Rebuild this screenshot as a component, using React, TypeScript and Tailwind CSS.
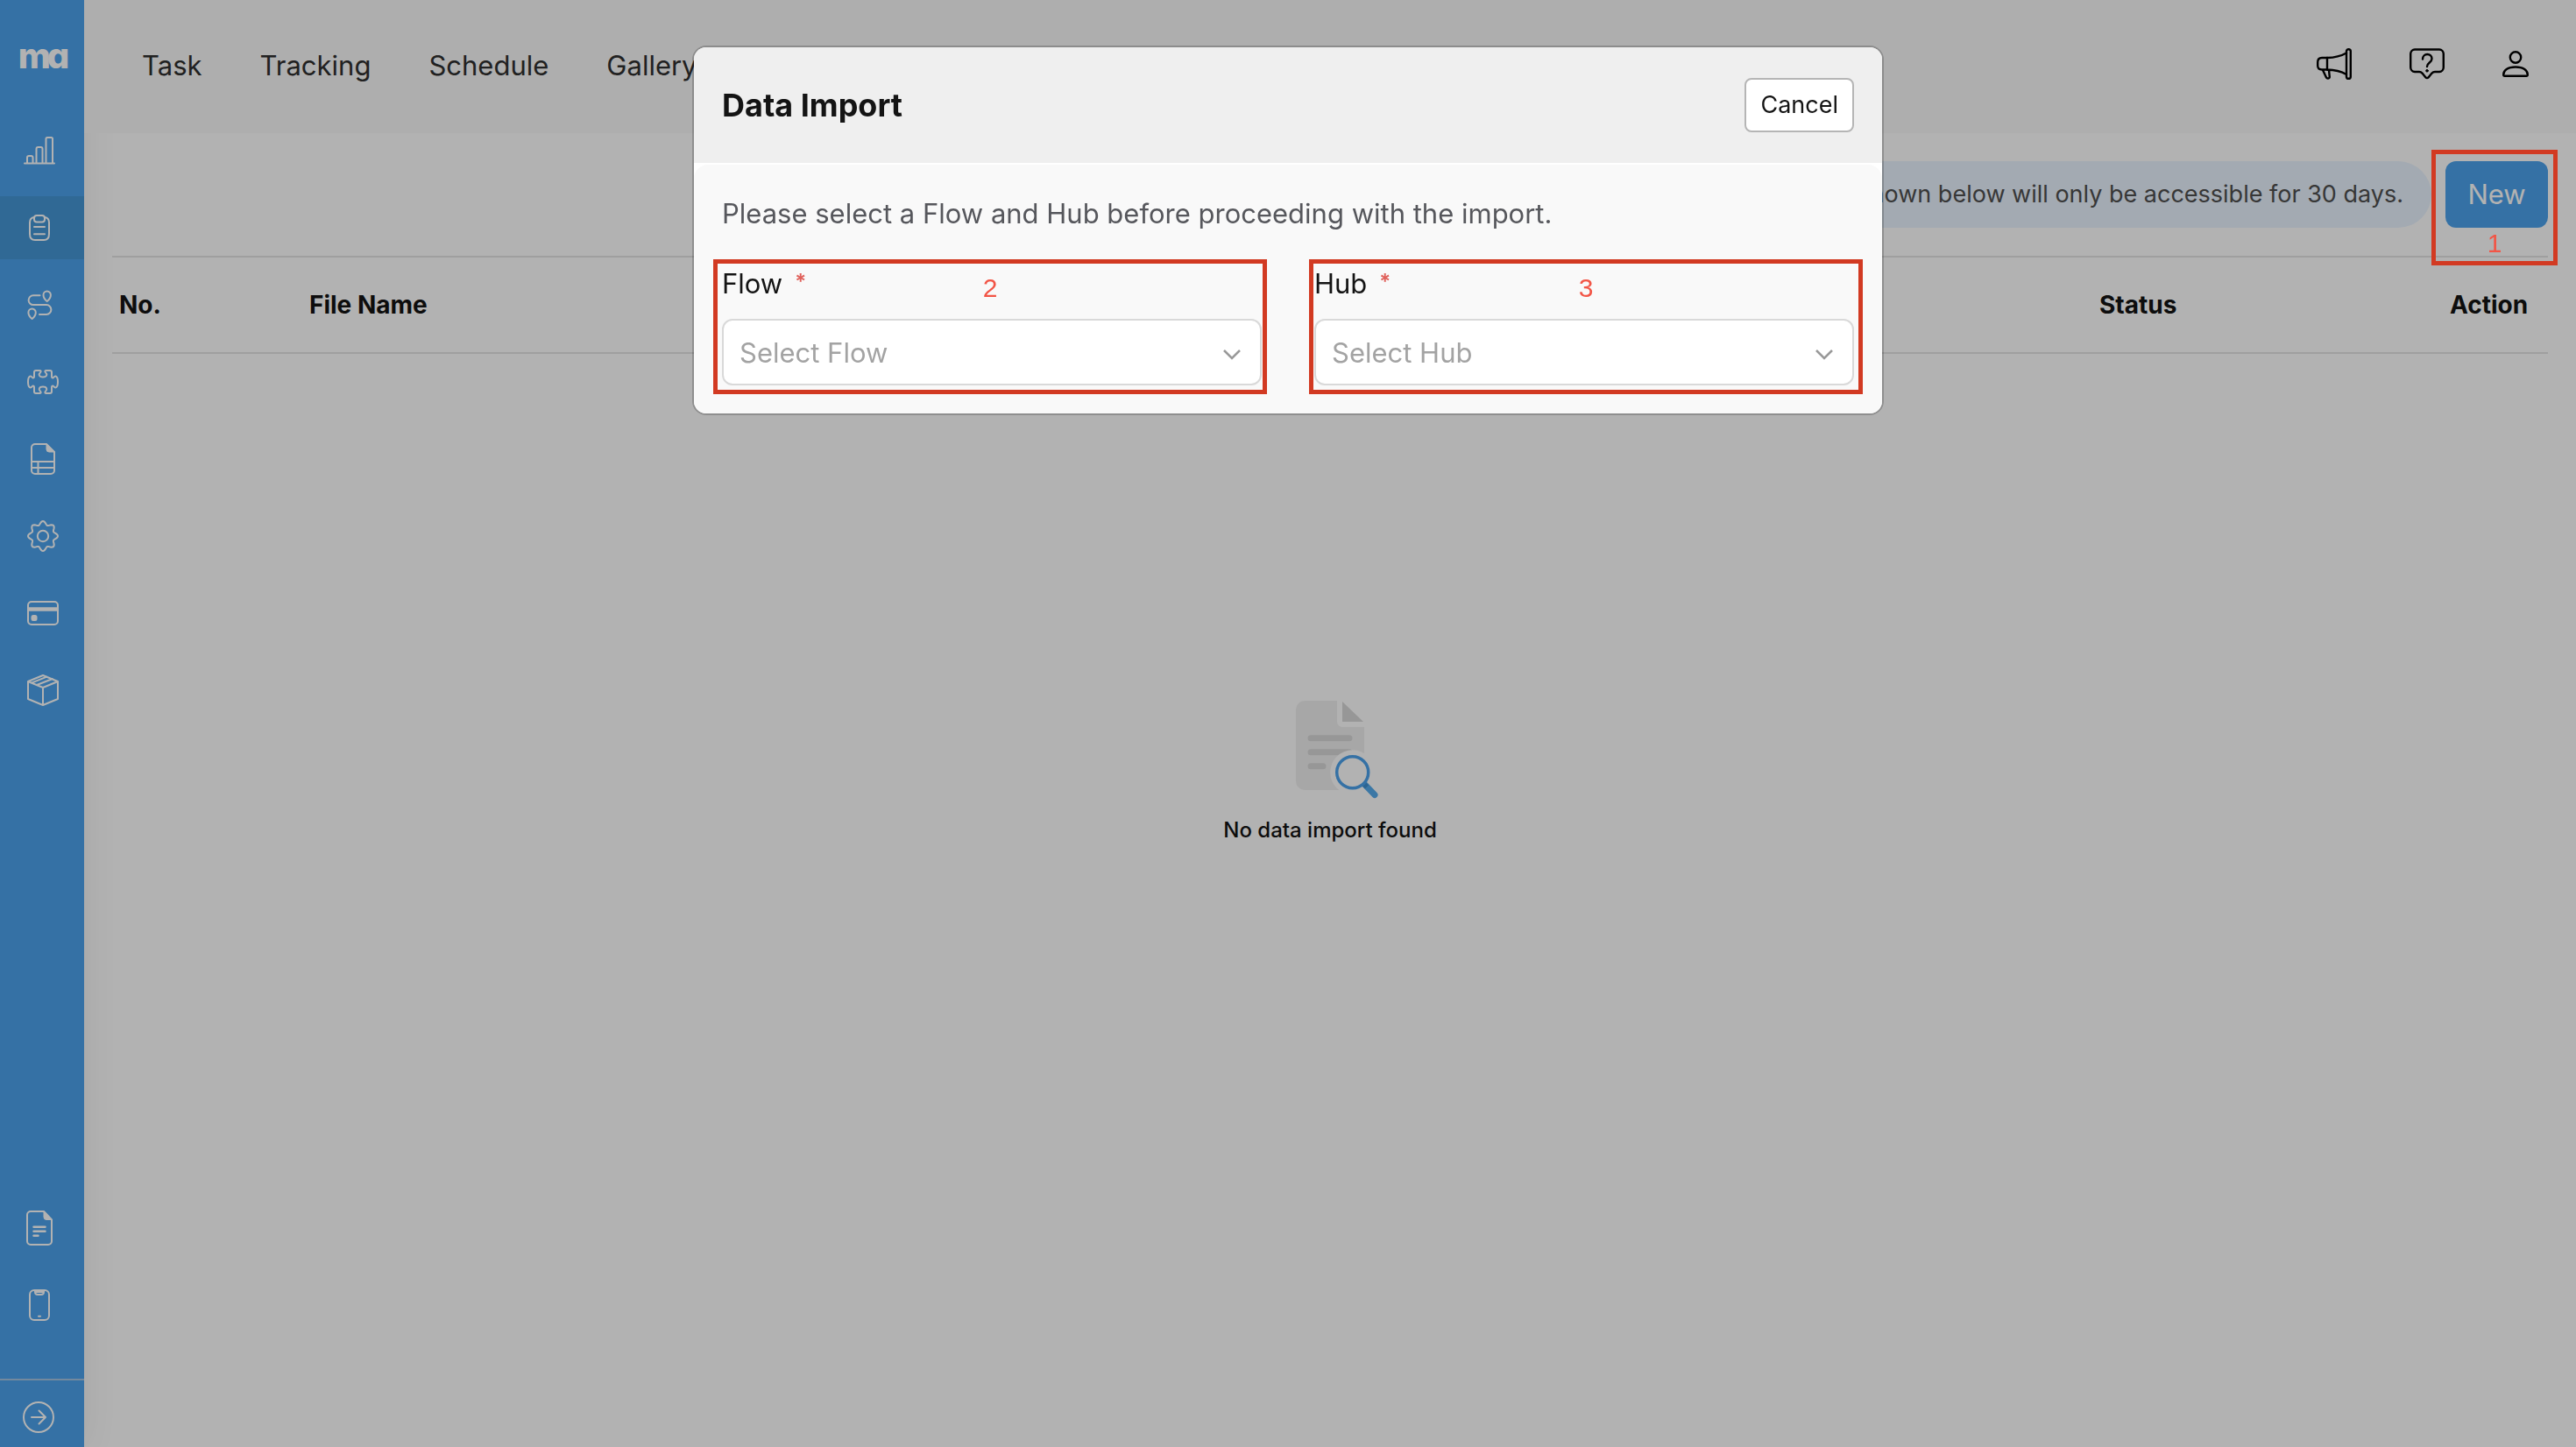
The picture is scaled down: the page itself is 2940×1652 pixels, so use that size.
import React from 'react';

type IconProps = { className?: string };

interface NavItem {
	label: string;
	icon: React.FC<IconProps>;
	active?: boolean;
}

const stroke = {
	fill: 'none',
	stroke: 'currentColor',
	strokeWidth: 2,
	strokeLinecap: 'round' as const,
	strokeLinejoin: 'round' as const,
};

const ChartIcon = ({ className }: IconProps) => (
	<svg className={className} viewBox="0 0 36 36" {...stroke}>
		<path d="M1 32.500h34M4 32v-6a2 2 0 0 1 2-2h2.500a2 2 0 0 1 2 2v6M14.500 32V16a2 2 0 0 1 2-2h3a2 2 0 0 1 2 2v16M25.500 32V4.500a1.500 1.500 0 0 1 1.500-1.500h4.500a1.500 1.500 0 0 1 1.500 1.500V32" />
	</svg>
);

const ClipboardIcon = ({ className }: IconProps) => (
	<svg className={className} viewBox="0 0 36 36" {...stroke}>
		<path d="M12 6c-3 .5-5 2.500-5 6v13c0 5 2.500 7 6 7h10c3.500 0 6-2 6-7V12c0-3.500-2-5.500-5-6" />
		<rect x="12" y="4" width="12" height="7.500" rx="3" />
		<path d="M12 17h12M12 25.300h12" />
	</svg>
);

const RouteIcon = ({ className }: IconProps) => (
	<svg className={className} viewBox="0 0 36 36" {...stroke}>
		<path d="M18.500 7.300H11a5.400 5.400 0 0 0 0 10.800h15a5.400 5.400 0 0 1 0 10.800h-8" />
		<path d="M26.700 14c-2.500-2-4.200-4.500-4.200-7.300a4.200 4.200 0 0 1 8.400 0c0 2.800-1.700 5.300-4.200 7.300zM9.600 34c-2.500-2-4.200-4.500-4.200-7.300a4.200 4.200 0 0 1 8.400 0c0 2.800-1.700 5.300-4.200 7.300z" />
	</svg>
);

const PuzzleIcon = ({ className }: IconProps) => (
	<svg className={className} viewBox="0 0 36 36" {...stroke}>
		<path d="M10 5h4.500c1.500 0 1.500 1.500.3 2.500-2 1.700-1.500 5 3.200 5s5.200-3.300 3.200-5c-1.200-1-1.200-2.500.3-2.500H26a2 2 0 0 1 2 2v5c0 1.500 1.200 2 2.200.8 2-2.500 4.800-1.500 4.800 5.200s-2.800 7.700-4.800 5.200c-1-1.200-2.200-.7-2.200.8v5a2 2 0 0 1-2 2h-4.500c-1.500 0-1.500-1.500-.3-2.500 2-1.700 1.500-5-3.200-5s-5.200 3.300-3.200 5c1.200 1 1.200 2.500-.3 2.500H10a2 2 0 0 1-2-2v-5c0-1.500-1.200-2-2.200-.8C3.800 25.700 1 24.700 1 18s2.800-7.700 4.800-5.200c1 1.200 2.200.7 2.200-.8V7a2 2 0 0 1 2-2z" />
	</svg>
);

const SheetIcon = ({ className }: IconProps) => (
	<svg className={className} viewBox="0 0 36 36" {...stroke}>
		<path d="M9 1h13l9 9v21a4 4 0 0 1-4 4H9a4 4 0 0 1-4-4V5a4 4 0 0 1 4-4zM5 21h26M5 28h26M12.500 21v14" />
		<path d="M22 1v6a3 3 0 0 0 3 3h6z" fill="currentColor" strokeWidth="1" />
	</svg>
);

// eight soft teeth around the hub
const gearPoints = Array.from({ length: 97 }, (_, i) => {
	const a = (i / 96) * Math.PI * 2;
	const r = 15 + 2 * Math.cos(8 * a);
	return `${(18 + r * Math.cos(a)).toFixed(2)},${(18 + r * Math.sin(a)).toFixed(2)}`;
}).join(' ');

const GearIcon = ({ className }: IconProps) => (
	<svg className={className} viewBox="0 0 36 36" {...stroke}>
		<polyline points={gearPoints} />
		<circle cx="18" cy="18" r="6.200" />
	</svg>
);

const CardIcon = ({ className }: IconProps) => (
	<svg className={className} viewBox="0 0 36 36" {...stroke}>
		<rect x="1" y="5" width="34" height="26" rx="4" />
		<path d="M1 13.600h34" strokeWidth="4.500" strokeLinecap="butt" />
		<rect x="4.500" y="20" width="7" height="7" rx="2.500" fill="currentColor" stroke="none" />
	</svg>
);

const BoxIcon = ({ className }: IconProps) => (
	<svg className={className} viewBox="0 0 36 36" {...stroke}>
		<path d="M18 1l17 7v20l-17 7-17-7V8zM1 8l17 7 17-7M18 15v20M5 9.600l17.500-7M11 12l18-7" />
	</svg>
);

const FileTextIcon = ({ className }: IconProps) => (
	<svg className={className} viewBox="0 0 30 40" {...stroke}>
		<path d="M5 1h15l9 9.500V35a4 4 0 0 1-4 4H5a4 4 0 0 1-4-4V5a4 4 0 0 1 4-4z" />
		<path d="M20 1v6.500a3 3 0 0 0 3 3h6z" fill="currentColor" strokeWidth="1" />
		<path d="M8.500 18.700h13M8.500 23.700h13M8.500 28.700h5" strokeWidth="2.500" />
	</svg>
);

const PhoneIcon = ({ className }: IconProps) => (
	<svg className={className} viewBox="0 0 24 36" {...stroke}>
		<rect x="1" y="1" width="22" height="34" rx="5" />
		<path d="M7 1.500v1.500a3 3 0 0 0 3 3h4a3 3 0 0 0 3-3V1.500M8 3h8M11 30.700h2" />
	</svg>
);

const ArrowCircleIcon = ({ className }: IconProps) => (
	<svg className={className} viewBox="0 0 36 36" {...stroke}>
		<circle cx="18" cy="18" r="17" />
		<path d="M10 18h16M18.500 10.500L26 18l-7.500 7.500" />
	</svg>
);

const MegaphoneIcon = ({ className }: IconProps) => (
	<svg className={className} viewBox="0 0 40 36" {...stroke} strokeWidth={2.4}>
		<rect x="34" y="1.200" width="4.800" height="33.600" rx="2.400" />
		<path d="M12 11c8-.2 15-1.500 22-5.500M12 24.500c8 .2 15 1.500 22 5.500M12 10.800v14M12 11H6c-3 0-4.800 1.500-4.800 5v4c0 3 1.800 4.500 4.800 4.500h6M7 25l4 8.500c.6 1.300 3.600 1.300 3.800-.3L14 25" />
	</svg>
);

const HelpIcon = ({ className }: IconProps) => (
	<svg className={className} viewBox="0 0 40 36" {...stroke} strokeWidth={2.4}>
		<path d="M6 1.500h28a5 5 0 0 1 4.800 5V22a5 5 0 0 1-4.800 5h-5c-1.500 0-2.500.5-3.500 1.600l-4 4.800c-.9 1-2.100 1-3 0l-4-4.800C13.500 27.500 12.500 27 11 27H6a5 5 0 0 1-4.800-5V6.500a5 5 0 0 1 4.800-5z" />
		<path d="M15 12.500c0-3.300 2.300-5.500 5.300-5.500s5.200 2.200 5.200 5c0 4.500-5.500 4.500-5.500 9" />
		<circle cx="20" cy="25.800" r="1.300" fill="currentColor" strokeWidth="1" />
	</svg>
);

const UserIcon = ({ className }: IconProps) => (
	<svg className={className} viewBox="0 0 30 30" {...stroke} strokeWidth={2.4}>
		<circle cx="15" cy="7.500" r="6.200" />
		<path d="M1.200 27.300C1.200 22.500 6 18.500 15 18.500s13.800 4 13.800 8.800c0 1-.5 1.500-1.500 1.500H2.700c-1 0-1.500-.5-1.500-1.500z" />
	</svg>
);

const NoDataIcon = ({ className }: IconProps) => (
	<svg className={className} viewBox="0 0 112 128" fill="none">
		<path d="M27 12h37v24a6 6 0 0 0 6 6h25v62a10 10 0 0 1-10 10H27a10 10 0 0 1-10-10V22a10 10 0 0 1 10-10z" fill="#f0f0f0" />
		<path d="M70 13l24 23H70z" fill="#d9d9d9" />
		<path d="M34 54.700h44M34 70.700h44M34 86.700h14" stroke="#d9d9d9" strokeWidth="7" strokeLinecap="round" />
		<circle cx="81.700" cy="93.700" r="25.500" fill="#fff" />
		<path d="M96 108l11 11.500" stroke="#55abec" strokeWidth="7" strokeLinecap="round" />
		<path d="M94 106.500l4 4" stroke="#3f90d2" strokeWidth="6" />
		<circle cx="81.700" cy="93.700" r="18" stroke="#4ca3ec" strokeWidth="3.500" />
	</svg>
);

const mainItems: NavItem[] = [
	{ label: 'Dashboard', icon: ChartIcon },
	{ label: 'Tasks', icon: ClipboardIcon, active: true },
	{ label: 'Routes', icon: RouteIcon },
	{ label: 'Add-ons', icon: PuzzleIcon },
	{ label: 'Reports', icon: SheetIcon },
	{ label: 'Settings', icon: GearIcon },
	{ label: 'Billing', icon: CardIcon },
	{ label: 'Packages', icon: BoxIcon },
];

const tabs = ['Task', 'Tracking', 'Schedule', 'Gallery'];

const Sidebar = () => (
	<aside className="flex w-24 shrink-0 flex-col bg-[#4ca3ec] text-white shadow-[0_0_40px_rgba(0,0,0,0.08)]">
		<div className="flex h-34 items-center justify-center pb-2 pl-1">
			<span className="flex text-[40px] leading-10 font-extrabold [font-feature-settings:'cv11']">
				<span>m</span>
				<span className="-ml-1">a</span>
			</span>
		</div>
		<nav className="flex flex-col gap-4">
			{mainItems.map(({ label, icon: Icon, active }, i) => (
				<a
					key={label}
					href="#"
					aria-label={label}
					className={`flex h-18 items-center justify-center ${i < 3 ? 'pr-1.5' : 'pl-0.5'} ${active ? 'bg-[#4597d6]' : ''}`}
				>
					<Icon className="h-9 w-9" />
				</a>
			))}
		</nav>
		<div className="mt-auto flex flex-col gap-4 pr-1.5">
			<a href="#" aria-label="Documents" className="flex h-18 items-center justify-center">
				<FileTextIcon className="h-10 w-[30px]" />
			</a>
			<a href="#" aria-label="Mobile app" className="flex h-18 items-center justify-center">
				<PhoneIcon className="h-9 w-6" />
			</a>
		</div>
		<button type="button" aria-label="Expand menu" className="mt-12 flex h-[78px] items-center justify-center border-t-2 border-[#a5c4e2] pr-2 pt-2">
			<ArrowCircleIcon className="h-9 w-9" />
		</button>
	</aside>
);

const Header = () => (
	<header className="flex h-38 items-center justify-between bg-[#f9f9f9] pr-[54px] pl-[66px]">
		<nav className="flex gap-[66px] pb-0.5 text-[31px] leading-10 text-[#303030]">
			{tabs.map((tab) => (
				<a key={tab} href="#">{tab}</a>
			))}
		</nav>
		<div className="flex items-center gap-[66px] pb-1.5 text-black">
			<button type="button" aria-label="Announcements"><MegaphoneIcon className="h-9 w-10" /></button>
			<button type="button" aria-label="Help"><HelpIcon className="h-9 w-10" /></button>
			<button type="button" aria-label="Account"><UserIcon className="h-[30px] w-[30px]" /></button>
		</div>
	</header>
);

interface SelectFieldProps {
	id: string;
	label: string;
	placeholder: string;
	step: string;
	stepClass: string;
}

const SelectField = ({ id, label, placeholder, step, stepClass }: SelectFieldProps) => (
	<div className="relative flex flex-col gap-4">
		<label htmlFor={id} className="flex gap-3.5 text-[31px] leading-12 text-[#141414]">
			{label}
			<span className="text-2xl leading-11 font-semibold text-[#e0605a]">*</span>
		</label>
		<div className="relative">
			<select
				id={id}
				defaultValue=""
				className="h-19 w-full appearance-none rounded-xl border-2 border-[#d9d9d9] bg-white px-[18px] pt-0.5 text-[31px] text-[#a3a3a3]"
			>
				<option value="">{placeholder}</option>
			</select>
			<svg className="pointer-events-none absolute top-8 right-6 h-4 w-5" viewBox="0 0 20 16" fill="none" stroke="#999" strokeWidth="2.500">
				<path d="M1 4l9 9 9-9" />
			</svg>
		</div>
		<div className={`pointer-events-none absolute -top-1 -bottom-2.5 border-5 border-[#d23a22] pt-2 text-center font-['Liberation_Sans',Arial,sans-serif] text-3xl leading-10 text-[#f25546] ${stepClass}`}>
			{step}
		</div>
	</div>
);

const ImportModal = () => (
	<div className="fixed inset-0 z-20 flex items-start justify-center pt-13">
		<div role="dialog" aria-label="Data Import" className="w-full max-w-[1360px] overflow-hidden rounded-2xl border-2 border-black/20 bg-white bg-clip-padding">
			<div className="flex h-33 items-center justify-between bg-[#efefef] px-8">
				<h2 className="text-4xl font-bold text-[#141414]">Data Import</h2>
				<button type="button" className="h-[62px] rounded-lg border-2 border-[#b5b5b5] bg-white px-4 text-[27px] text-[#141414]">
					Cancel
				</button>
			</div>
			<div className="mt-0.5 flex flex-col gap-8 rounded-t-2xl bg-[#f9f9f9] p-8">
				<p className="text-[31px] leading-12 text-[#56575c]">Please select a Flow and Hub before proceeding with the import.</p>
				<div className="grid grid-cols-2 gap-15">
					<SelectField id="flow" label="Flow" placeholder="Select Flow" step="2" stepClass="-left-2.5 -right-1.5" />
					<SelectField id="hub" label="Hub" placeholder="Select Hub" step="3" stepClass="-left-1.5 -right-2.5" />
				</div>
			</div>
		</div>
	</div>
);

const App: React.FC = () => {
	return (
		<div className="flex min-h-screen bg-white font-[Inter,'Liberation_Sans',sans-serif]">
			<Sidebar />
			<div className="flex min-w-0 flex-1 flex-col">
				<Header />
				<main className="px-8 pt-8">
					<div className="flex items-center justify-end gap-4">
						<p className="flex h-19 items-center rounded-full bg-[#eaf4ff] px-8 text-[27px] text-[#505050]">
							shown below will only be accessible for 30 days.
						</p>
						<div className="relative">
							<button type="button" className="h-19 w-[117px] rounded-xl bg-[#4ca3ec] text-[31px] text-white">New</button>
							<div className="pointer-events-none absolute -top-[13px] -right-[11px] -bottom-[43px] -left-4 z-30 flex items-end justify-center border-5 border-[#d23a22] font-['Liberation_Sans',Arial,sans-serif] text-3xl leading-10 text-[#f25546]">
								1
							</div>
						</div>
					</div>
					<table className="mt-8 w-full table-fixed border-collapse text-left text-[28px] text-[#141414]">
						<thead>
							<tr className="h-[110px] border-y-2 border-[#e4e4e4]">
								<th scope="col" className="w-[217px] px-2 font-bold">No.</th>
								<th scope="col" className="px-2 font-bold">File Name</th>
								<th scope="col" className="w-100 px-2 font-bold">Status</th>
								<th scope="col" className="w-30 px-2 font-bold">Action</th>
							</tr>
						</thead>
					</table>
					<div className="mt-96 flex flex-col items-center">
						<NoDataIcon className="h-32 w-28" />
						<p className="mt-4 text-2xl leading-8 font-medium text-[#141414]">No data import found</p>
					</div>
				</main>
			</div>
			<div className="fixed inset-0 z-10 bg-black/30" />
			<ImportModal />
		</div>
	);
};

export default App;
